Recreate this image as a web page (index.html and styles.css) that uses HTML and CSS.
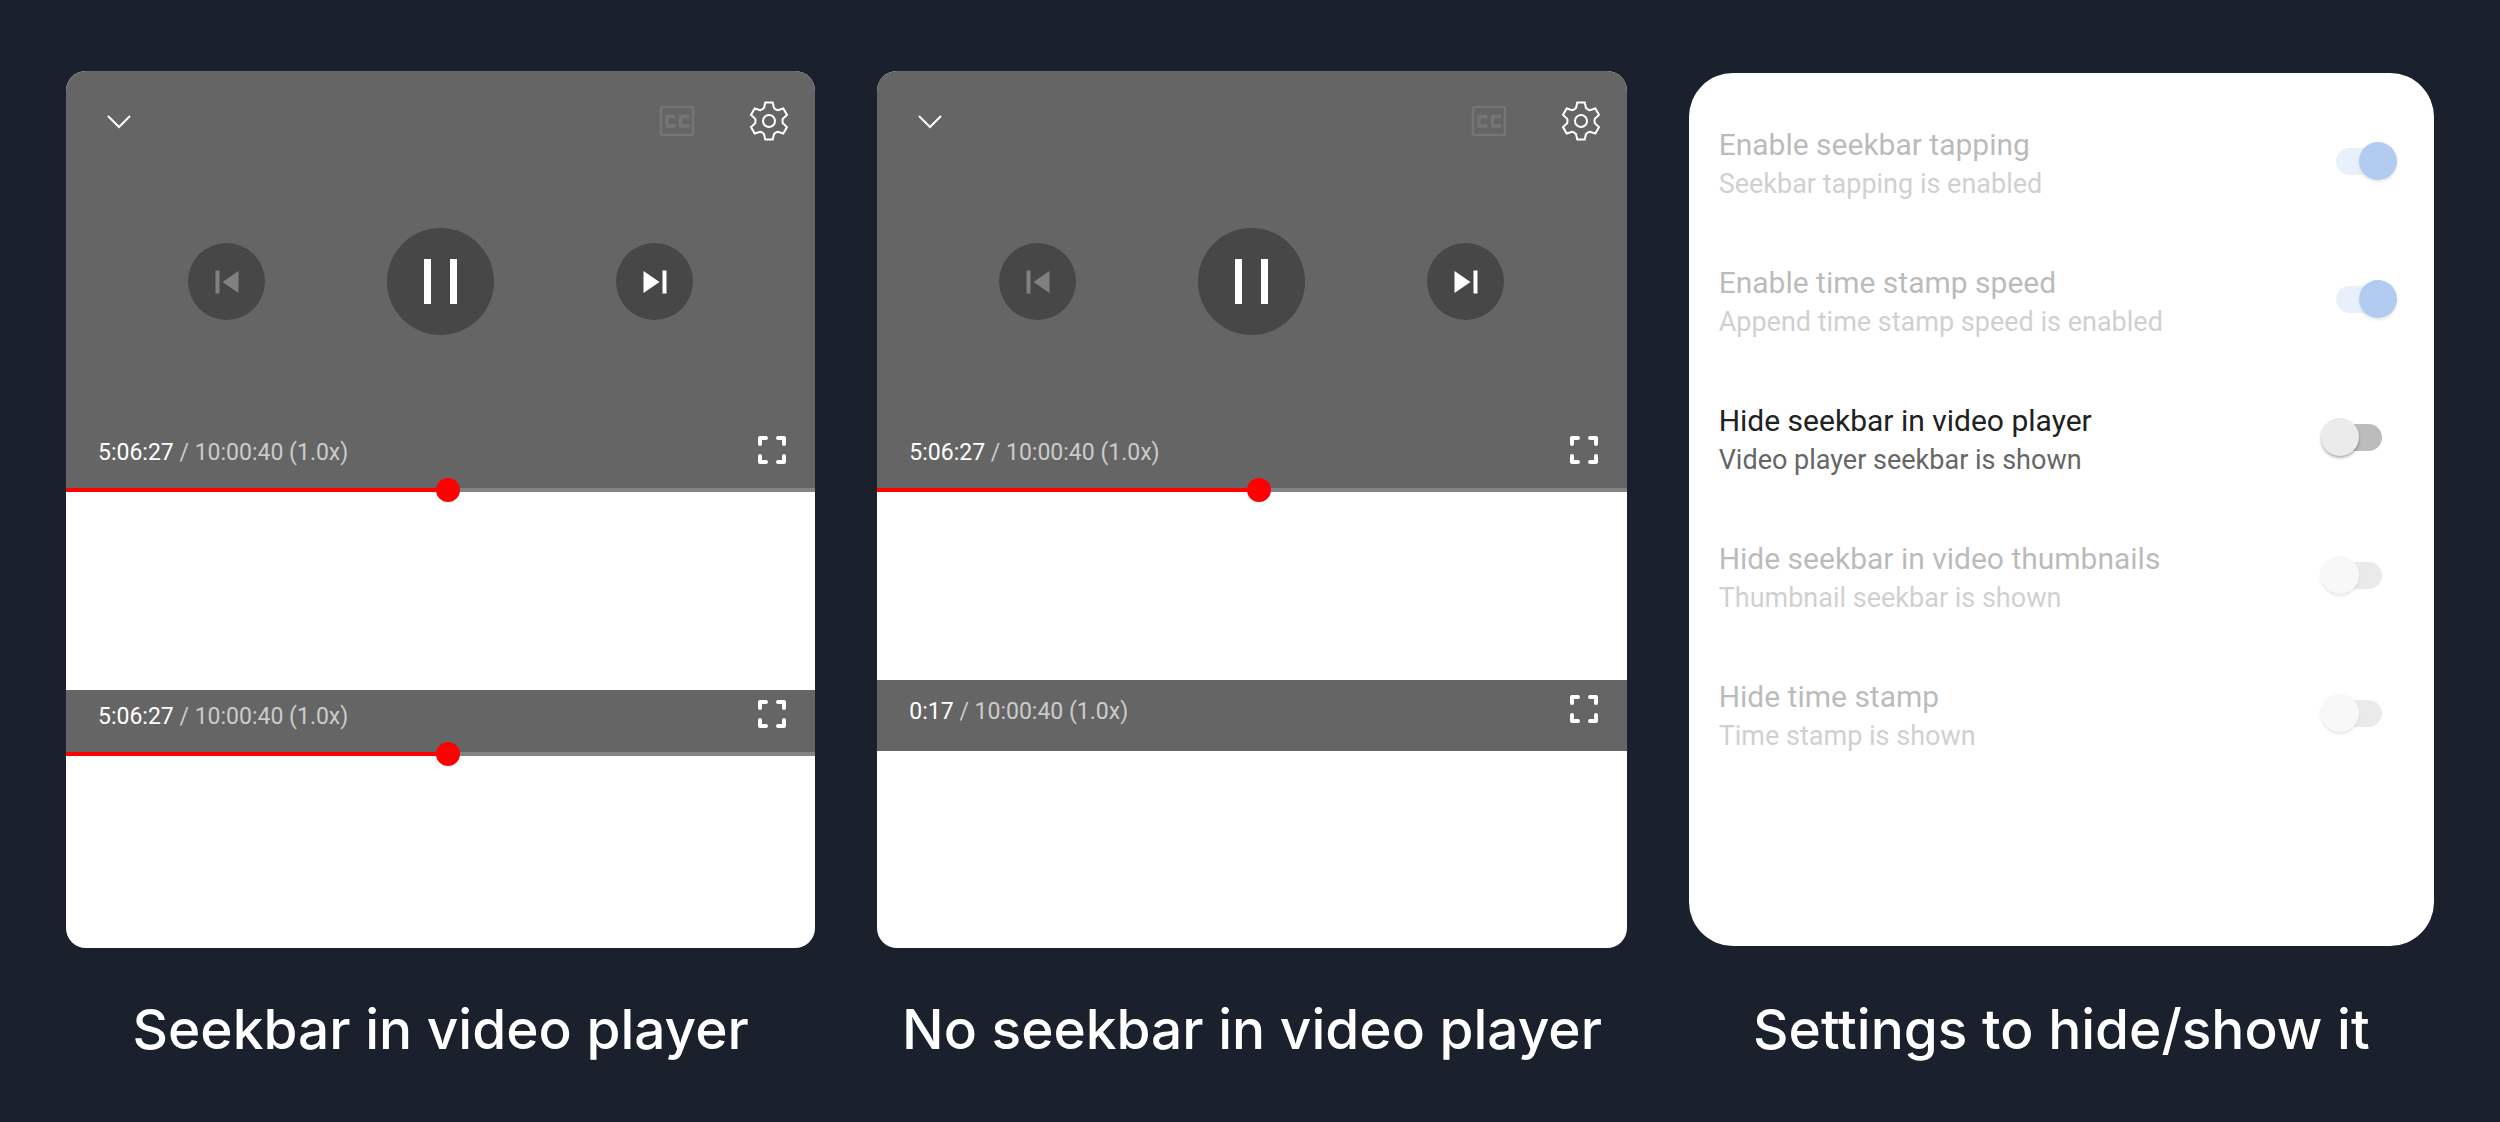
FILE: index.html
```html
<!DOCTYPE html>
<html lang="en">
<head>
<meta charset="utf-8">
<meta name="viewport" content="width=device-width, initial-scale=1">
<title>Seekbar settings</title>
<link rel="stylesheet" href="styles.css">
</head>
<body>
<svg class="sprite" aria-hidden="true">
  <symbol id="chevron" viewBox="0 0 28 28"><path d="M3 9 14 20 25 9" fill="none" stroke="currentColor" stroke-width="2"/></symbol>
  <symbol id="captions" viewBox="0 0 36 32">
    <rect x="2" y="2" width="32" height="28" rx="2" fill="none" stroke="currentColor" stroke-width="2.500"/>
    <path d="M15 13.500v-2H8v9.500H15V19M28.500 13.500v-2h-7v9.500h7V19" fill="none" stroke="currentColor" stroke-width="3.500" stroke-linejoin="round"/>
  </symbol>
  <symbol id="gear" viewBox="0 0 40 40">
    <path d="M16.300 1.400H23.700L25 7Q26.500 8.500 28.800 9.200L34.300 7.500 38 13.900 33.800 17.800Q33.200 20 33.800 22.200L38 26.100 34.300 32.500 28.800 30.800Q26.500 31.500 25 33L23.700 38.600H16.300L15 33Q13.500 31.500 11.200 30.800L5.700 32.500 2 26.100 6.200 22.200Q6.800 20 6.200 17.800L2 13.900 5.700 7.500 11.200 9.200Q13.500 8.500 15 7Z" fill="none" stroke="currentColor" stroke-width="2"/>
    <circle cx="20" cy="20" r="6" fill="none" stroke="currentColor" stroke-width="2"/>
  </symbol>
  <symbol id="previous" viewBox="0 0 24 24"><path d="M.500.500h4v23h-4zM23.500 1v22L7.500 12z" fill="currentColor"/></symbol>
  <symbol id="next" viewBox="0 0 24 24"><path d="M19.500.500h4v23h-4zM.500 1v22L16.500 12z" fill="currentColor"/></symbol>
  <symbol id="pause" viewBox="0 0 33 45"><path d="M0 0h7v45H0zM26 0h7v45h-7z" fill="currentColor"/></symbol>
  <symbol id="fullscreen" viewBox="0 0 28 28"><path d="M2 8V2h6M20 2h6v6M26 20v6h-6M8 26H2v-6" fill="none" stroke="currentColor" stroke-width="4" stroke-linecap="round" stroke-linejoin="round"/></symbol>
</svg>

<main class="showcase">
  <figure class="example">
    <div class="panel">
      <section class="video">
        <div class="topbar">
          <button class="icon-button" type="button" aria-label="Collapse"><svg width="28" height="28"><use href="#chevron"/></svg></button>
          <div class="topbar-actions">
            <button class="icon-button icon-button--off" type="button" aria-label="Captions" disabled><svg width="36" height="32"><use href="#captions"/></svg></button>
            <button class="icon-button" type="button" aria-label="Settings"><svg width="40" height="40"><use href="#gear"/></svg></button>
          </div>
        </div>
        <div class="transport">
          <button class="round round--off" type="button" aria-label="Previous" disabled><svg width="24" height="24"><use href="#previous"/></svg></button>
          <button class="round round--large" type="button" aria-label="Pause"><svg width="33" height="45"><use href="#pause"/></svg></button>
          <button class="round" type="button" aria-label="Next"><svg width="24" height="24"><use href="#next"/></svg></button>
        </div>
        <div class="status">
          <p class="time"><span class="elapsed">5:06:27</span> / 10:00:40 (1.0x)</p>
          <button class="icon-button" type="button" aria-label="Full screen"><svg width="28" height="28"><use href="#fullscreen"/></svg></button>
        </div>
        <input class="seekbar" type="range" min="0" max="36040" value="18387" aria-label="Seek">
      </section>
      <section class="strip strip--seekbar">
        <div class="status">
          <p class="time"><span class="elapsed">5:06:27</span> / 10:00:40 (1.0x)</p>
          <button class="icon-button" type="button" aria-label="Full screen"><svg width="28" height="28"><use href="#fullscreen"/></svg></button>
        </div>
        <input class="seekbar" type="range" min="0" max="36040" value="18387" aria-label="Seek">
      </section>
    </div>
    <figcaption class="caption">Seekbar in video player</figcaption>
  </figure>

  <figure class="example">
    <div class="panel">
      <section class="video">
        <div class="topbar">
          <button class="icon-button" type="button" aria-label="Collapse"><svg width="28" height="28"><use href="#chevron"/></svg></button>
          <div class="topbar-actions">
            <button class="icon-button icon-button--off" type="button" aria-label="Captions" disabled><svg width="36" height="32"><use href="#captions"/></svg></button>
            <button class="icon-button" type="button" aria-label="Settings"><svg width="40" height="40"><use href="#gear"/></svg></button>
          </div>
        </div>
        <div class="transport">
          <button class="round round--off" type="button" aria-label="Previous" disabled><svg width="24" height="24"><use href="#previous"/></svg></button>
          <button class="round round--large" type="button" aria-label="Pause"><svg width="33" height="45"><use href="#pause"/></svg></button>
          <button class="round" type="button" aria-label="Next"><svg width="24" height="24"><use href="#next"/></svg></button>
        </div>
        <div class="status">
          <p class="time"><span class="elapsed">5:06:27</span> / 10:00:40 (1.0x)</p>
          <button class="icon-button" type="button" aria-label="Full screen"><svg width="28" height="28"><use href="#fullscreen"/></svg></button>
        </div>
        <input class="seekbar" type="range" min="0" max="36040" value="18387" aria-label="Seek">
      </section>
      <section class="strip strip--plain">
        <div class="status">
          <p class="time"><span class="elapsed">0:17</span> / 10:00:40 (1.0x)</p>
          <button class="icon-button" type="button" aria-label="Full screen"><svg width="28" height="28"><use href="#fullscreen"/></svg></button>
        </div>
      </section>
    </div>
    <figcaption class="caption">No seekbar in video player</figcaption>
  </figure>

  <figure class="example">
    <div class="panel panel--settings">
      <label class="setting setting--off">
        <span class="setting-text"><span class="setting-title">Enable seekbar tapping</span><span class="setting-summary">Seekbar tapping is enabled</span></span>
        <input class="switch" type="checkbox" role="switch" checked disabled>
      </label>
      <label class="setting setting--off">
        <span class="setting-text"><span class="setting-title">Enable time stamp speed</span><span class="setting-summary">Append time stamp speed is enabled</span></span>
        <input class="switch" type="checkbox" role="switch" checked disabled>
      </label>
      <label class="setting">
        <span class="setting-text"><span class="setting-title">Hide seekbar in video player</span><span class="setting-summary">Video player seekbar is shown</span></span>
        <input class="switch" type="checkbox" role="switch">
      </label>
      <label class="setting setting--off">
        <span class="setting-text"><span class="setting-title">Hide seekbar in video thumbnails</span><span class="setting-summary">Thumbnail seekbar is shown</span></span>
        <input class="switch" type="checkbox" role="switch" disabled>
      </label>
      <label class="setting setting--off">
        <span class="setting-text"><span class="setting-title">Hide time stamp</span><span class="setting-summary">Time stamp is shown</span></span>
        <input class="switch" type="checkbox" role="switch" disabled>
      </label>
    </div>
    <figcaption class="caption">Settings to hide/show it</figcaption>
  </figure>
</main>
</body>
</html>
```
FILE: styles.css
```css
* { box-sizing: border-box; }

body {
  margin: 0;
  min-height: 100vh;
  background: #1b202d;
  font-family: Roboto, "Liberation Sans", sans-serif;
}

button {
  border: 0;
  padding: 0;
  background: none;
  color: #fff;
}

svg { display: block; }

.sprite {
  position: absolute;
  width: 0;
  height: 0;
}

.showcase {
  display: grid;
  grid-template-columns: 749fr 749fr 745fr;
  gap: 62px;
  padding: 71px 66px 0;
}

.example {
  display: flex;
  flex-direction: column;
  min-width: 0;
  margin: 0;
}

.panel {
  min-height: 877px;
  border-radius: 20px;
  background: #fff;
  overflow: hidden;
}

.panel--settings {
  min-height: 873px;
  margin: 2px 0;
  padding: 22px 37px 22px 30px;
  border-radius: 44px;
}

.caption {
  padding-top: 47px;
  color: #fff;
  font: 500 55px/68px Inter, "Liberation Sans", sans-serif;
  text-align: center;
  white-space: nowrap;
}

/* Player */
.video,
.strip {
  display: flex;
  flex-direction: column;
  background: #656565;
}

.video { padding-top: 30px; }

.topbar,
.topbar-actions,
.transport {
  display: flex;
  align-items: center;
}

.topbar {
  justify-content: space-between;
  padding: 0 26px 0 39px;
}

.topbar-actions { gap: 54px; }

.icon-button--off { color: #757575; }

.transport {
  justify-content: center;
  gap: 122px;
  padding: 87px 0 101px;
}

.round {
  display: grid;
  place-items: center;
  width: 77px;
  height: 77px;
  border-radius: 50%;
  background: #474747;
}

.round--large {
  width: 107px;
  height: 107px;
}

.round--off { color: #808080; }

.status {
  display: flex;
  align-items: flex-start;
  justify-content: space-between;
  padding: 0 29px 18px 32px;
}

.time {
  margin: 0;
  color: #cbcbcb;
  font-size: 23px;
  line-height: 34px;
}

.elapsed { color: #fff; }

.seekbar {
  appearance: none;
  display: block;
  width: 100%;
  height: 4px;
  margin: 0;
  background: linear-gradient(90deg, #f00 51%, #848484 51%);
}

.seekbar::-webkit-slider-thumb {
  appearance: none;
  width: 24px;
  height: 24px;
  border-radius: 50%;
  background: #f00;
}

.strip--seekbar {
  margin-top: 198px;
  padding-top: 10px;
}

.strip--plain {
  margin-top: 188px;
  padding: 15px 0 4px;
}

/* Settings */
.setting {
  display: flex;
  align-items: flex-start;
  justify-content: space-between;
  padding: 31px 0 29px;
}

.setting--off { opacity: .3; }

.setting-text {
  display: flex;
  flex-direction: column;
}

.setting-title {
  color: #212121;
  font-size: 30px;
  line-height: 38px;
}

.setting-summary {
  color: #666;
  font-size: 27px;
  line-height: 40px;
}

.switch {
  appearance: none;
  display: grid;
  align-items: center;
  width: 76px;
  height: 70px;
  margin: 0;
}

.switch::before,
.switch::after {
  content: "";
  grid-area: 1 / 1;
}

.switch::before {
  height: 27px;
  margin: 0 15px;
  border-radius: 14px;
  background: #bcbcbc;
}

.switch::after {
  width: 38px;
  height: 38px;
  border-radius: 50%;
  background: #ebebeb;
  box-shadow: 0 2px 3px rgb(0 0 0 / .3);
}

.switch:checked::before { background: #b6d0f5; }

.switch:checked::after {
  justify-self: end;
  background: #0058d0;
}
```
